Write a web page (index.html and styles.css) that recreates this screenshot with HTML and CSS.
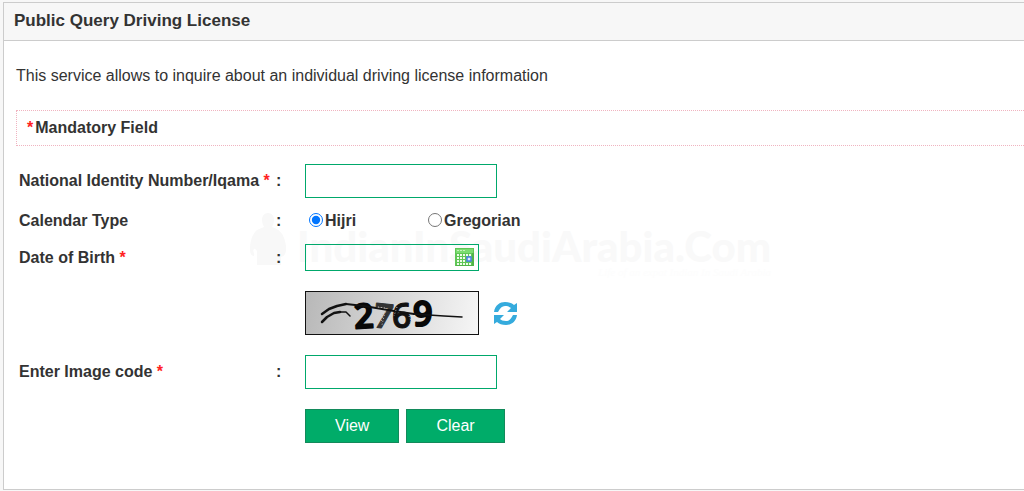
FILE: index.html
```html
<!DOCTYPE html>
<html lang="en">
  <head>
    <meta charset="UTF-8" />
    <meta name="viewport" content="width=device-width, initial-scale=1.0" />
    <title>Public Query Driving License</title>
    <link rel="stylesheet" href="styles.css">
  </head>
  <body>
    <main class="panel">
      <h1 class="panel-title">Public Query Driving License</h1>

      <div class="panel-body">
        <div class="watermark" aria-hidden="true">
          <svg class="watermark-logo" viewBox="0 0 38 54">
            <path d="M19 1c4 0 6 3 6 7 0 3-1 5-2 7 6 2 10 5 12 11 2 5 3 12 1 16-1 2-3 3-4 3v8H8V39c-1-1-2-3-3-2-2 2 1 4 0 7-3 0-4-3-4-7C1 30 3 22 8 18c2-1 5-2 7-3-1-2-2-4-2-7 0-4 2-7 6-7z"/>
          </svg>
          <div class="watermark-text">
            <span class="watermark-name">IndianInSaudiArabia.Com</span>
            <span class="watermark-tag">Life of an expat Indian In Saudi Arabia</span>
          </div>
        </div>

        <p class="intro">This service allows to inquire about an individual driving license information</p>
        <div class="note"><span class="star">*</span>Mandatory Field</div>

        <form class="form">
          <div class="row compact">
            <label class="label" for="identity">National Identity Number/Iqama <span class="star">*</span></label>
            <span class="colon">:</span>
            <input class="field" type="text" id="identity" name="identity">
          </div>

          <div class="row compact" role="radiogroup" aria-labelledby="calendar-label">
            <span class="label" id="calendar-label">Calendar Type</span>
            <span class="colon">:</span>
            <div class="options">
              <label class="option"><input type="radio" name="calendar" value="hijri" checked>Hijri</label>
              <label class="option"><input type="radio" name="calendar" value="gregorian">Gregorian</label>
            </div>
          </div>

          <div class="row">
            <label class="label" for="birth">Date of Birth <span class="star">*</span></label>
            <span class="colon">:</span>
            <div class="date-box">
              <input class="date-field" type="text" id="birth" name="birth">
              <button class="icon-button" type="button" aria-label="Open calendar">
                <svg class="calendar-icon" width="20" height="19" viewBox="0 0 20 19">
                  <path fill="#5fc655" d="M0 0h19v18H0z"/>
                  <path fill="#7bdc70" d="M1 1h17v4H1z"/>
                  <path stroke="#c4f3bb" stroke-dasharray="2 1" d="M2 2.500h9"/>
                  <path fill="#4fb447" d="M17 5h2v13H1v-1h16z"/>
                  <path fill="#eefbea" d="M2 6h2v2H2zM5 6h2v2H5zM8 6h2v2H8zM11 6h2v2h-2zM14 6h2v2h-2zM2 9h2v2H2zM5 9h2v2H5zM8 9h2v2H8zM2 12h2v2H2zM5 12h2v2H5zM8 12h2v2H8zM2 15h2v2H2zM5 15h2v2H5zM8 15h2v2H8zM11 15h2v2h-2zM14 15h2v2h-2z"/>
                  <path fill="#dce8ff" stroke="#4b7fe8" stroke-width="1.500" d="M12 9h4v4h-4z"/>
                </svg>
              </button>
            </div>
          </div>

          <div class="row">
            <div class="captcha">
              <svg class="captcha-image" viewBox="0 0 172 42" role="img" aria-label="Image code">
                <g font-family="Open Sans, sans-serif" font-weight="600" font-size="34" stroke-linejoin="round">
                  <text x="48" y="36" fill="#080808" stroke="#080808" stroke-width="2" transform="rotate(-3 58 24)">2</text>
                  <text x="68" y="36" fill="#333" stroke="#333" stroke-width="1" transform="rotate(6 76 24)">7</text>
                  <text x="86" y="36" fill="#111" stroke="#111" stroke-width="1">6</text>
                  <text x="107" y="34" fill="#080808" stroke="#080808" stroke-width="2">9</text>
                </g>
                <g fill="none" stroke="#111" stroke-linecap="round" stroke-linejoin="round">
                  <path stroke-width="2.500" d="M16 22l7-5 8-3 9-2"/>
                  <path stroke-width="2" d="M40 12l18 2 30 5 20 3"/>
                  <path stroke-width="1.500" d="M108 22l30 2 18 1"/>
                  <path stroke-width="2.500" d="M16 30l5-5 7-4 6-1"/>
                  <path stroke-width="1.500" d="M34 20l6 0 4 4"/>
                </g>
                <path stroke="#bbb" stroke-width="1" stroke-dasharray="1 2" fill="none" d="M72 15l7 1M77 22l-2 9M79 20l-3 13M91 15l-3 9M103 24l2 5-2 5"/>
              </svg>
              <button class="icon-button" type="button" aria-label="Refresh image">
                <svg class="refresh-icon" width="25" height="25" viewBox="0 0 25 25">
                  <g fill="#35abdd">
                    <path d="M1 11C2 4 7 1 12 1c4 0 7 1 9 3l3-2v9H14l4-4c-1-1-3-2-6-2-3 0-5 2-7 6z"/>
                    <path d="M24 14c-1 7-6 10-11 10-4 0-7-1-9-3l-3 2v-9h10l-4 4c1 1 3 2 6 2 3 0 5-2 7-6z"/>
                  </g>
                </svg>
              </button>
            </div>
          </div>

          <div class="row">
            <label class="label" for="code">Enter Image code <span class="star">*</span></label>
            <span class="colon">:</span>
            <input class="field" type="text" id="code" name="code">
          </div>

          <div class="row">
            <div class="actions">
              <button class="button" type="submit">View</button>
              <button class="button" type="reset">Clear</button>
            </div>
          </div>
        </form>
      </div>
    </main>
  </body>
</html>
```
FILE: styles.css
```css
* {
  box-sizing: border-box;
}

body {
  margin: 0;
  padding: 2px 0 1px 3px;
  background-color: #f7f7f7;
  color: #333;
  font-family: "Liberation Sans", Arial, sans-serif;
  font-size: 16px;
  line-height: 20px;
}

.panel {
  border: 1px solid #ccc;
  border-right: none;
  background-color: #fff;
}

.panel-title {
  margin: 0;
  padding: 8px 10px 9px;
  border-bottom: 1px solid #ccc;
  background-color: #f7f7f7;
  font-size: 17px;
  line-height: 20px;
}

.panel-body {
  position: relative;
  padding: 25px 0 26px 12px;
}

.intro {
  margin: 0 0 24px;
}

.note {
  padding: 7px 10px;
  border: 1px dotted #f0b4c0;
  border-right: none;
  font-weight: bold;
}

.star {
  color: #f22;
}

.note .star {
  margin-right: 2px;
}

.form {
  position: relative;
  padding: 18px 0 0 3px;
}

.row {
  display: grid;
  grid-template-columns: 257px 29px 1fr;
  align-items: center;
  margin-bottom: 20px;
  font-weight: bold;
}

.row.compact {
  margin-bottom: 10px;
}

.field,
.date-box {
  border: 1px solid #00a86b;
  border-radius: 0;
  background-color: transparent;
}

.field {
  width: 192px;
  height: 34px;
  padding: 4px 8px;
  font: inherit;
}

.options {
  display: flex;
  height: 26px;
}

.option {
  display: flex;
  align-items: center;
  width: 119px;
}

.option input {
  width: 14px;
  height: 14px;
  margin: 0 2px 2px 4px;
}

.date-box {
  display: flex;
  align-items: center;
  width: 174px;
  height: 27px;
  padding-right: 3px;
}

.date-field {
  flex: 1;
  min-width: 0;
  height: 100%;
  padding: 2px 8px;
  border: none;
  background: transparent;
  font: inherit;
}

.icon-button {
  display: flex;
  padding: 0;
  border: none;
  background: none;
  cursor: pointer;
}

.captcha,
.actions {
  grid-column: 3;
  display: flex;
  align-items: center;
}

.captcha {
  gap: 14px;
}

.captcha-image {
  width: 174px;
  height: 44px;
  border: 1px solid #111;
  background: linear-gradient(100deg, #b8b8b8, #f6f6f6);
}

.actions {
  gap: 7px;
}

.button {
  height: 34px;
  padding: 0 29px;
  border: 1px solid #138a5b;
  background-color: #00ac69;
  color: #fff;
  font-family: inherit;
  font-size: 16px;
  cursor: pointer;
}

.button:hover {
  background-color: #008f57;
}

/* Faint site mark behind the form */
.watermark {
  position: absolute;
  top: 171px;
  left: 245px;
  display: flex;
  gap: 10px;
  color: #f9f9f9;
  white-space: nowrap;
}

.watermark-logo {
  width: 38px;
  height: 54px;
  fill: #f8f8f8;
}

.watermark-text {
  display: flex;
  flex-direction: column;
  padding-top: 14px;
}

.watermark-name {
  font-family: Lato, sans-serif;
  font-size: 42px;
  font-weight: 900;
  line-height: 40px;
}

.watermark-tag {
  align-self: flex-end;
  color: #fdfdfd;
  font-family: "Liberation Serif", serif;
  font-size: 11px;
  font-style: italic;
  line-height: 12px;
}
```
